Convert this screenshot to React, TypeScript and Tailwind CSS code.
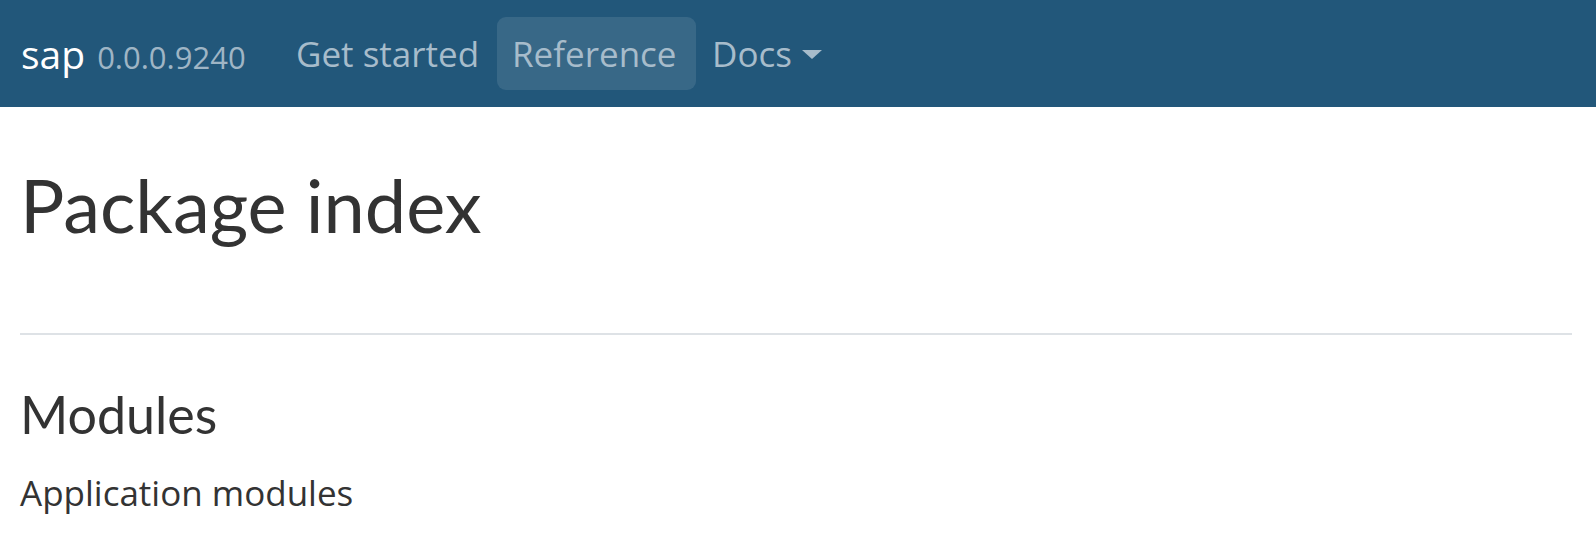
export default function App() {
  const navFont = { fontFamily: '"Open Sans", "Noto Sans", sans-serif' };
  const headFont = { fontFamily: 'Lato, "Noto Sans", sans-serif' };

  return (
    <div className="min-h-[546px] bg-white text-[#333333]" style={navFont}>
      <nav className="flex h-[107px] items-center bg-[#22577a] pl-[21px]">
        <div className="flex w-[259px] items-baseline">
          <a className="text-[39px] leading-none text-white">sap</a>
          <span className="ml-[12px] text-[31px] leading-none text-[#9fb5c5]">0.0.0.9240</span>
        </div>
        <a className="flex h-[73px] w-[217px] items-center pl-[16px] text-[35px] leading-none text-[#a7bccb]">
          Get started
        </a>
        <a className="flex h-[73px] w-[199px] items-center rounded-[9px] bg-white/10 pl-[15px] text-[35px] leading-none text-[#a7bccb]">
          Reference
        </a>
        <a className="flex h-[73px] items-center pl-[16px] text-[35px] leading-none text-[#a7bccb]">
          Docs
          <span className="ml-[10px] mt-[2px] h-0 w-0 border-x-[10px] border-t-[9px] border-x-transparent border-t-[#a7bccb]" />
        </a>
      </nav>

      <main className="px-[20px]">
        <h1 className="mt-[61px] text-[74px] leading-none font-normal" style={headFont}>
          Package index
        </h1>
        <hr className="mt-[91px] mr-[4px] border-0 border-t-2 border-[#dee2e6]" />
        <h2 className="mt-[53px] text-[52px] leading-none font-normal" style={headFont}>
          Modules
        </h2>
        <p className="mt-[35px] text-[35px] leading-none">Application modules</p>
      </main>
    </div>
  );
}
